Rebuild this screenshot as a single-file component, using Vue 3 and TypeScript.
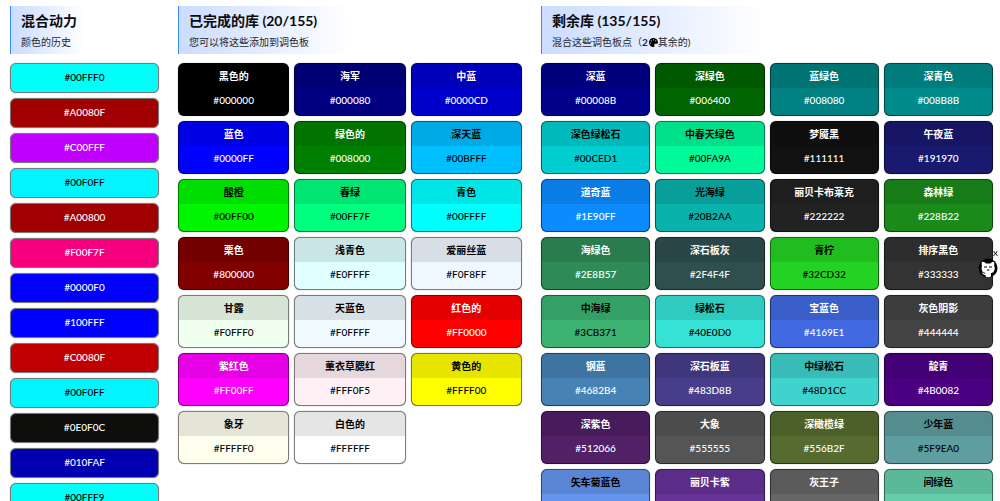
<script setup lang="ts">
interface Swatch {
  name: string
  hex: string
  fill?: string
  dark?: boolean
}

interface Mix {
  hex: string
  fill?: string
  dark?: boolean
}

const history: Mix[] = [
  { hex: '#00FFF0', fill: '#00FFF8', dark: true },
  { hex: '#A0080F', fill: '#A00000' },
  { hex: '#C00FFF', fill: '#C000FF' },
  { hex: '#00F0FF', fill: '#00F5FF', dark: true },
  { hex: '#A00800', fill: '#A00000' },
  { hex: '#F00F7F', fill: '#F6007F' },
  { hex: '#0000F0', fill: '#0000FC' },
  { hex: '#100FFF', fill: '#0000FF' },
  { hex: '#C0080F', fill: '#C00000' },
  { hex: '#00F0FF', fill: '#00F5FF', dark: true },
  { hex: '#0E0F0C' },
  { hex: '#010FAF', fill: '#0000B0' },
  { hex: '#00FFF9', dark: true },
]

const completed: Swatch[] = [
  { name: '黑色的', hex: '#000000' },
  { name: '海军', hex: '#000080' },
  { name: '中蓝', hex: '#0000CD' },
  { name: '蓝色', hex: '#0000FF' },
  { name: '绿色的', hex: '#008000' },
  { name: '深天蓝', hex: '#00BFFF', dark: true },
  { name: '酸橙', hex: '#00FF00', fill: '#00F600', dark: true },
  { name: '春绿', hex: '#00FF7F', dark: true },
  { name: '青色', hex: '#00FFFF', dark: true },
  { name: '栗色', hex: '#800000' },
  { name: '浅青色', hex: '#E0FFFF', dark: true },
  { name: '爱丽丝蓝', hex: '#F0F8FF', dark: true },
  { name: '甘露', hex: '#F0FFF0', dark: true },
  { name: '天蓝色', hex: '#F0FFFF', fill: '#F0FAFF', dark: true },
  { name: '红色的', hex: '#FF0000' },
  { name: '紫红色', hex: '#FF00FF' },
  { name: '薰衣草腮红', hex: '#FFF0F5', dark: true },
  { name: '黄色的', hex: '#FFFF00', dark: true },
  { name: '象牙', hex: '#FFFFF0', dark: true },
  { name: '白色的', hex: '#FFFFFF', dark: true },
]

const remaining: Swatch[] = [
  { name: '深蓝', hex: '#00008B' },
  { name: '深绿色', hex: '#006400' },
  { name: '蓝绿色', hex: '#008080' },
  { name: '深青色', hex: '#008B8B' },
  { name: '深色绿松石', hex: '#00CED1', dark: true },
  { name: '中春天绿色', hex: '#00FA9A', dark: true },
  { name: '梦魇黑', hex: '#111111' },
  { name: '午夜蓝', hex: '#191970' },
  { name: '道奇蓝', hex: '#1E90FF', fill: '#0C8BFF' },
  { name: '光海绿', hex: '#20B2AA', fill: '#0AB2AC', dark: true },
  { name: '丽贝卡布莱克', hex: '#222222' },
  { name: '森林绿', hex: '#228B22', fill: '#1A8B1A' },
  { name: '海绿色', hex: '#2E8B57' },
  { name: '深石板灰', hex: '#2F4F4F' },
  { name: '青柠', hex: '#32CD32', fill: '#24D224', dark: true },
  { name: '排序黑色', hex: '#333333' },
  { name: '中海绿', hex: '#3CB371', dark: true },
  { name: '绿松石', hex: '#40E0D0', fill: '#36E2D6', dark: true },
  { name: '宝蓝色', hex: '#4169E1' },
  { name: '灰色阴影', hex: '#444444' },
  { name: '钢蓝', hex: '#4682B4' },
  { name: '深石板蓝', hex: '#483D8B' },
  { name: '中绿松石', hex: '#48D1CC', fill: '#40D2CC', dark: true },
  { name: '靛青', hex: '#4B0082' },
  { name: '深紫色', hex: '#512066' },
  { name: '大象', hex: '#555555' },
  { name: '深橄榄绿', hex: '#556B2F' },
  { name: '少年蓝', hex: '#5F9EA0', dark: true },
  { name: '矢车菊蓝色', hex: '#6495ED', dark: true },
  { name: '丽贝卡紫', hex: '#663399' },
  { name: '灰王子', hex: '#666666' },
  { name: '间绿色', hex: '#66CDAA', dark: true },
]
</script>

<template>
  <main class="page">
    <section class="column">
      <header class="head">
        <h2>混合动力</h2>
        <p>颜色的历史</p>
      </header>
      <div class="history">
        <button
          v-for="(mix, i) in history"
          :key="i"
          type="button"
          class="mix"
          :class="{ dark: mix.dark }"
          :style="{ backgroundColor: mix.fill ?? mix.hex }"
        >{{ mix.hex }}</button>
      </div>
    </section>

    <section class="column">
      <header class="head">
        <h2>已完成的库 (20/155)</h2>
        <p>您可以将这些添加到调色板</p>
      </header>
      <div class="swatches three">
        <button
          v-for="s in completed"
          :key="s.hex"
          type="button"
          class="swatch"
          :class="{ dark: s.dark }"
          :style="{ backgroundColor: s.fill ?? s.hex }"
        >
          <span class="name">{{ s.name }}</span>
          <span class="hex">{{ s.hex }}</span>
        </button>
      </div>
    </section>

    <section class="column">
      <header class="head">
        <h2>剩余库 (135/155)</h2>
        <p>
          混合这些调色板点（<b>2</b>
          <svg class="palette" viewBox="0 0 512 512" aria-hidden="true">
            <path
              fill="currentColor"
              fill-rule="evenodd"
              d="M204 5C105 24 26 104 6 202c-37 187 131 327 258 307 41-6 61-54 42-91-23-45 10-98 60-98h80c36 0 66-30 66-66C511 95 368-27 204 5zM96 320a32 32 0 1 1 0-64 32 32 0 0 1 0 64zm32-128a32 32 0 1 1 0-64 32 32 0 0 1 0 64zm128-64a32 32 0 1 1 0-64 32 32 0 0 1 0 64zm128 64a32 32 0 1 1 0-64 32 32 0 0 1 0 64z"
            />
          </svg>其余的)
        </p>
      </header>
      <div class="swatches four">
        <button
          v-for="s in remaining"
          :key="s.hex"
          type="button"
          class="swatch"
          :class="{ dark: s.dark }"
          :style="{ backgroundColor: s.fill ?? s.hex }"
        >
          <span class="name">{{ s.name }}</span>
          <span class="hex">{{ s.hex }}</span>
        </button>
      </div>
    </section>

    <aside class="floating">
      <button type="button" class="close">x</button>
      <a href="#" class="github" aria-label="GitHub">
        <svg viewBox="0 0 40 40" aria-hidden="true">
          <circle cx="20" cy="20" r="19" fill="#000" />
          <path
            fill="#fff"
            d="M8 8c3-1 6 1 8 3h9c2-2 5-4 7-3 1 3 1 5 0 7 2 3 2 8 0 11-1 3-4 4-6 4v7c-3 2-8 2-11 0v-3c-5 1-5-3-8-5 3-1 4 3 8 2v-1c-4-1-6-2-7-5-1-3-1-7 0-10-1-2-1-5 0-7z"
          />
          <path
            fill="none"
            stroke="#000"
            stroke-width="2"
            d="M12 18h6M22 18h6M18 24h5"
          />
        </svg>
      </a>
    </aside>
  </main>
</template>

<style>
body {
  margin: 0;
  background: #fff;
}
</style>

<style scoped>
.page {
  display: grid;
  grid-template-columns: 149fr 344fr 452fr;
  gap: 19px;
  align-items: start;
  box-sizing: border-box;
  height: 100vh;
  overflow: hidden;
  padding: 6px 7px 0 10px;
  color: #0b0b0f;
  font-family: Lato, "Noto Sans CJK SC", sans-serif;
  font-size: 10px;
}

.column {
  min-width: 0;
}

.head {
  box-sizing: border-box;
  height: 48px;
  margin-bottom: 9px;
  padding: 5px 10px;
  border-left: 1px solid #3b8bf5;
  background: linear-gradient(to right, #cbdcff, #fff 50%);
  white-space: nowrap;
}

h2 {
  margin: 0;
  font-size: 14px;
  line-height: 20px;
  font-weight: 700;
}

p {
  margin: 3px 0 0;
  line-height: 16px;
  color: #25272d;
}

.palette {
  width: 9px;
  height: 9px;
  margin-left: 1px;
  vertical-align: -1px;
  color: #000;
}

.history {
  display: grid;
  gap: 5px;
}

button {
  margin: 0;
  padding: 0;
  font: inherit;
  color: #fff;
  cursor: pointer;
}

.dark {
  color: #000;
}

.mix {
  height: 30px;
  border: 1px solid #7b7b7b;
  border-radius: 6px;
  line-height: 26px;
  padding-bottom: 2px;
  font-weight: 500;
  box-shadow: 0 0 1px rgba(0, 0, 0, 0.5);
}

.swatches {
  display: grid;
  gap: 5px;
}

.three {
  grid-template-columns: repeat(3, minmax(0, 1fr));
}

.four {
  grid-template-columns: repeat(4, minmax(0, 1fr));
}

.swatch {
  display: flex;
  flex-direction: column;
  height: 53px;
  border: 1px solid rgba(0, 0, 0, 0.5);
  border-radius: 6px;
  overflow: hidden;
  box-shadow: 0 0 1px rgba(0, 0, 0, 0.5);
}

.name {
  width: 100%;
  background: rgba(0, 0, 0, 0.1);
  line-height: 24px;
  font-weight: 700;
}

.hex {
  width: 100%;
  line-height: 24px;
  font-weight: 500;
}

.floating {
  position: fixed;
  top: 247px;
  right: 2px;
  display: flex;
  flex-direction: column;
  align-items: flex-end;
}

.close {
  border: 0;
  background: none;
  color: #000;
  line-height: 11px;
}

.github,
.github svg {
  display: block;
  width: 20px;
  height: 20px;
}
</style>
